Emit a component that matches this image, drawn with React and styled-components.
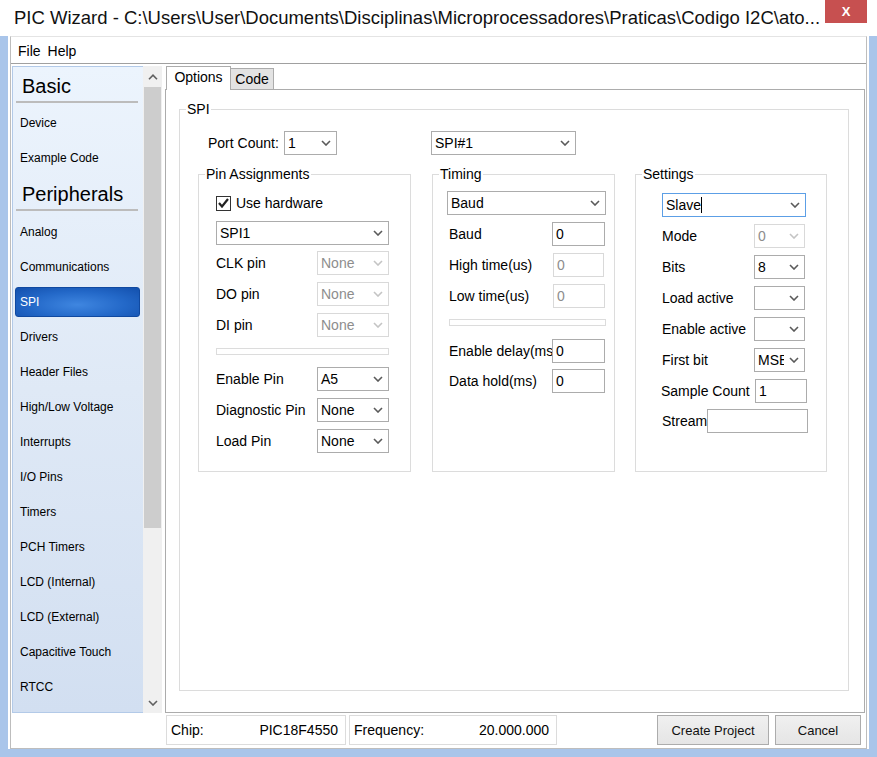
import React from "react";
import styled, { createGlobalStyle } from "styled-components";

const GlobalStyle = createGlobalStyle`
  html, body { margin: 0; padding: 0; background: #fff; }
  body { font-family: "Liberation Sans", Arial, sans-serif; color: #000; }
  *, *::before, *::after { box-sizing: border-box; }
`;

const Window = styled.div`
  width: 877px;
  height: 757px;
  display: flex;
  flex-direction: column;
  background: #fff;
  overflow: hidden;
`;

const TitleBar = styled.div`
  height: 36px;
  flex: none;
  display: flex;
  align-items: center;
  padding-left: 14px;
`;

const Title = styled.div`
  flex: 1;
  min-width: 0;
  font-size: 18.5px;
  white-space: nowrap;
  overflow: hidden;
  color: #111;
`;

const CloseButton = styled.div`
  flex: none;
  align-self: flex-start;
  width: 42px;
  height: 23px;
  margin: 0 10px 0 1px;
  background: #c75050;
  color: #fff;
  font-size: 13px;
  font-weight: bold;
  display: flex;
  align-items: center;
  justify-content: center;
`;

const Frame = styled.div`
  flex: 1;
  min-height: 0;
  display: flex;
  background: #a9c5ea;
  padding: 0 8px 8px;
`;

const Client = styled.div`
  flex: 1;
  display: flex;
  background: #fff;
  padding: 0 2px;
`;

const Inner = styled.div`
  flex: 1;
  display: flex;
  flex-direction: column;
  border: 1px solid #bdbdbd;
  border-top-color: #e4e4e4;
`;

const MenuBar = styled.div`
  height: 27px;
  flex: none;
  display: flex;
  align-items: center;
  gap: 7px;
  padding: 2px 0 0 7px;
  border-bottom: 1px solid #a0a0a0;
  font-size: 14px;
`;

const MainRow = styled.div`
  height: 647px;
  flex: none;
  display: flex;
  margin-top: 2px;
  padding: 0 1px;
`;

const Sidebar = styled.div`
  width: 131px;
  flex: none;
  display: flex;
  flex-direction: column;
  overflow: hidden;
  border: 1px solid #b3cae8;
  border-right: none;
  background: linear-gradient(180deg, #ecf4fd 0%, #dfe9f6 50%, #d2dff1 100%);
`;

const SideHeader = styled.div`
  flex: none;
  height: 36px;
  margin: 0 5px ${(p) => p.$mb}px 3px;
  padding: 5px 0 0 6px;
  line-height: 29px;
  font-size: 20px;
  border-bottom: 2px solid #bcbcbc;
`;

const SideItem = styled.div`
  flex: none;
  height: 35px;
  padding: 3px 3px 2px 2px;
`;

const SideLabel = styled.div`
  height: 30px;
  line-height: 28px;
  padding-left: 4px;
  font-size: 12px;
  border-radius: 3px;
  white-space: nowrap;
  color: ${(p) => (p.$selected ? "#fff" : "#000")};
  background: ${(p) =>
    p.$selected
      ? "radial-gradient(ellipse at 50% 60%, #3f86e0 0%, #2368c8 55%, #1350ad 100%)"
      : "transparent"};
  border: 1px solid ${(p) => (p.$selected ? "#1049a0" : "transparent")};
`;

const ScrollBar = styled.div`
  width: 19px;
  flex: none;
  display: flex;
  flex-direction: column;
  background: #f0f0f0;
`;

const ScrollArrow = styled.div`
  height: 21px;
  flex: none;
  display: flex;
  align-items: center;
  justify-content: center;
`;

const ScrollThumb = styled.div`
  height: 441px;
  margin: 0 1px;
  background: #cdcdcd;
`;

const ScrollSpace = styled.div`
  flex: 1;
`;

const TabArea = styled.div`
  flex: 1;
  min-width: 0;
  margin-left: 3px;
  display: flex;
  flex-direction: column;
`;

const TabStrip = styled.div`
  height: 23px;
  flex: none;
  display: flex;
  align-items: flex-end;
  padding-left: 1px;
  position: relative;
  z-index: 1;
`;

const Tab = styled.div`
  width: ${(p) => p.$w}px;
  height: ${(p) => (p.$active ? 24 : 21)}px;
  margin-bottom: ${(p) => (p.$active ? -1 : 0)}px;
  margin-left: ${(p) => (p.$active ? 0 : -1)}px;
  border: 1px solid #acacac;
  border-bottom: none;
  background: ${(p) => (p.$active ? "#fff" : "#e3e3e3")};
  display: flex;
  justify-content: center;
  padding-top: 2px;
  font-size: 14px;
  line-height: 16px;
`;

const Panel = styled.div`
  flex: 1;
  min-height: 0;
  display: flex;
  flex-direction: column;
  border: 1px solid #acacac;
  background: #fff;
  padding: 11px 15px 21px 13px;
`;

const Group = styled.fieldset`
  margin: 0 0 0 ${(p) => p.$ml || 0}px;
  padding: 0;
  min-width: 0;
  border: 1px solid #dcdcdc;
  ${(p) => (p.$grow ? "flex: 1;" : "")}
  ${(p) => (p.$w ? `width: ${p.$w}px; flex: none;` : "")}
  ${(p) => (p.$h ? `height: ${p.$h}px;` : "")}
`;

const Legend = styled.legend`
  margin-left: 6px;
  padding: 0 1px;
  font-size: 14px;
  line-height: 16px;
`;

const GroupBody = styled.div`
  display: flex;
  flex-direction: column;
  align-items: flex-start;
  padding-left: ${(p) => p.$pl}px;
`;

const PortRow = styled.div`
  display: flex;
  align-items: center;
  height: 24px;
  margin-top: 14px;
  padding-left: 28px;
`;

const GroupsRow = styled.div`
  display: flex;
  align-items: flex-start;
  margin: 11px 0 0 18px;
`;

const Row = styled.div`
  display: flex;
  align-items: center;
  height: 24px;
  margin-top: ${(p) => p.$mt}px;
`;

const Label = styled.div`
  flex: none;
  width: ${(p) => (p.$w ? `${p.$w}px` : "auto")};
  padding-left: ${(p) => p.$pl || 0}px;
  margin-left: ${(p) => p.$ml || 0}px;
  font-size: 14px;
  white-space: nowrap;
  overflow: hidden;
`;

const SelectBox = styled.div`
  flex: none;
  width: ${(p) => p.$w}px;
  height: 24px;
  margin-top: ${(p) => p.$mt || 0}px;
  margin-left: ${(p) => p.$ml || 0}px;
  display: flex;
  align-items: center;
  padding-left: 2px;
  background: #fff;
  font-size: 14px;
  color: ${(p) => (p.$disabled ? "#8d8d8d" : "#000")};
  border: 1px solid
    ${(p) => (p.$focused ? "#5c9fe6" : p.$disabled ? "#d9d9d9" : "#acacac")};
`;

const SelectText = styled.div`
  flex: 1;
  min-width: 0;
  overflow: hidden;
  white-space: nowrap;
  padding-left: 1px;
  display: flex;
  align-items: center;
`;

const SelectArrow = styled.div`
  flex: none;
  width: 20px;
  display: flex;
  align-items: center;
  justify-content: center;
`;

const Caret = styled.span`
  display: inline-block;
  width: 1px;
  height: 16px;
  background: #000;
`;

const InputBox = styled.div`
  flex: none;
  width: ${(p) => p.$w}px;
  height: 24px;
  margin-left: ${(p) => p.$ml || 0}px;
  display: flex;
  align-items: center;
  padding-left: 3px;
  background: #fff;
  font-size: 14px;
  color: ${(p) => (p.$disabled ? "#8d8d8d" : "#000")};
  border: 1px solid ${(p) => (p.$disabled ? "#d9d9d9" : "#acacac")};
`;

const CheckRow = styled.div`
  display: flex;
  align-items: center;
  gap: 5px;
  height: 16px;
  margin-top: 13px;
  font-size: 14px;
`;

const CheckBox = styled.div`
  width: 15px;
  height: 15px;
  border: 1px solid #333;
  background: #fff;
  display: flex;
  align-items: center;
  justify-content: center;
`;

const Separator = styled.div`
  width: ${(p) => p.$w}px;
  height: 7px;
  margin-top: ${(p) => p.$mt}px;
  margin-left: ${(p) => p.$ml || 0}px;
  border: 1px solid #dcdcdc;
  background: #fff;
`;

const StatusBar = styled.div`
  height: 35px;
  flex: none;
  display: flex;
  align-items: flex-start;
  gap: 3px;
  padding: 2px 5px 0 155px;
`;

const StatusField = styled.div`
  width: ${(p) => p.$w}px;
  height: 30px;
  display: flex;
  align-items: center;
  justify-content: space-between;
  padding: 0 7px 0 4px;
  border: 1px solid #dcdcdc;
  font-size: 14px;
`;

const Button = styled.div`
  width: ${(p) => p.$w}px;
  height: 30px;
  margin-left: ${(p) => p.$ml}px;
  display: flex;
  align-items: center;
  justify-content: center;
  border: 1px solid #acacac;
  background: linear-gradient(180deg, #f0f0f0 0%, #e5e5e5 100%);
  font-size: 13px;
  color: #111;
`;

const Chevron = ({ up, color = "#5a5a5a" }) => (
  <svg width="10" height="6" viewBox="0 0 10 6">
    <polyline
      points={up ? "1,5.2 5,1.2 9,5.2" : "1,1 5,5 9,1"}
      fill="none"
      stroke={color}
      strokeWidth="1.6"
    />
  </svg>
);

const Select = ({ w, value, disabled, focused, caret, mt, ml }) => (
  <SelectBox $w={w} $disabled={disabled} $focused={focused} $mt={mt} $ml={ml}>
    <SelectText>
      {value}
      {caret && <Caret />}
    </SelectText>
    <SelectArrow>
      <Chevron color={disabled ? "#c4c4c4" : "#5a5a5a"} />
    </SelectArrow>
  </SelectBox>
);

const sideTop = ["Device", "Example Code"];
const sidePeripherals = [
  "Analog",
  "Communications",
  "SPI",
  "Drivers",
  "Header Files",
  "High/Low Voltage",
  "Interrupts",
  "I/O Pins",
  "Timers",
  "PCH Timers",
  "LCD (Internal)",
  "LCD (External)",
  "Capacitive Touch",
  "RTCC",
  "CCP and PWM",
];

export default function App() {
  return (
    <>
      <GlobalStyle />
      <Window>
        <TitleBar>
          <Title>
            PIC Wizard - C:\Users\User\Documents\Disciplinas\Microprocessadores\Praticas\Codigo I2C\ato...
          </Title>
          <CloseButton>X</CloseButton>
        </TitleBar>
        <Frame>
          <Client>
            <Inner>
              <MenuBar>
                <span>File</span>
                <span>Help</span>
              </MenuBar>
              <MainRow>
                <Sidebar>
                  <SideHeader $mb={2}>Basic</SideHeader>
                  {sideTop.map((t) => (
                    <SideItem key={t}>
                      <SideLabel>{t}</SideLabel>
                    </SideItem>
                  ))}
                  <SideHeader $mb={3}>Peripherals</SideHeader>
                  {sidePeripherals.map((t) => (
                    <SideItem key={t}>
                      <SideLabel $selected={t === "SPI"}>{t}</SideLabel>
                    </SideItem>
                  ))}
                </Sidebar>
                <ScrollBar>
                  <ScrollArrow>
                    <Chevron up color="#606060" />
                  </ScrollArrow>
                  <ScrollThumb />
                  <ScrollSpace />
                  <ScrollArrow>
                    <Chevron color="#606060" />
                  </ScrollArrow>
                </ScrollBar>
                <TabArea>
                  <TabStrip>
                    <Tab $active $w={65}>Options</Tab>
                    <Tab $w={44}>Code</Tab>
                  </TabStrip>
                  <Panel>
                    <Group $grow>
                      <Legend>SPI</Legend>
                      <PortRow>
                        <Label $w={76}>Port Count:</Label>
                        <Select w={53} value="1" />
                        <Select w={145} value="SPI#1" ml={94} />
                      </PortRow>
                      <GroupsRow>
                        <Group $w={213} $h={306}>
                          <Legend>Pin Assignments</Legend>
                          <GroupBody $pl={17}>
                            <CheckRow>
                              <CheckBox>
                                <svg width="11" height="10" viewBox="0 0 11 10">
                                  <polyline
                                    points="1,5 4,8.5 10,1"
                                    fill="none"
                                    stroke="#222"
                                    strokeWidth="2.2"
                                  />
                                </svg>
                              </CheckBox>
                              Use hardware
                            </CheckRow>
                            <Select w={173} value="SPI1" mt={10} />
                            <Row $mt={6}>
                              <Label $w={101}>CLK pin</Label>
                              <Select w={72} value="None" disabled />
                            </Row>
                            <Row $mt={7}>
                              <Label $w={101}>DO pin</Label>
                              <Select w={72} value="None" disabled />
                            </Row>
                            <Row $mt={7}>
                              <Label $w={101}>DI pin</Label>
                              <Select w={72} value="None" disabled />
                            </Row>
                            <Separator $w={173} $mt={11} />
                            <Row $mt={12}>
                              <Label $w={101}>Enable Pin</Label>
                              <Select w={72} value="A5" />
                            </Row>
                            <Row $mt={7}>
                              <Label $w={101}>Diagnostic Pin</Label>
                              <Select w={72} value="None" />
                            </Row>
                            <Row $mt={7}>
                              <Label $w={101}>Load Pin</Label>
                              <Select w={72} value="None" />
                            </Row>
                          </GroupBody>
                        </Group>
                        <Group $w={183} $h={306} $ml={21}>
                          <Legend>Timing</Legend>
                          <GroupBody $pl={14}>
                            <Select w={159} value="Baud" mt={9} />
                            <Row $mt={7}>
                              <Label $w={105} $pl={2}>Baud</Label>
                              <InputBox $w={53}>0</InputBox>
                            </Row>
                            <Row $mt={7}>
                              <Label $w={105} $pl={2}>High time(us)</Label>
                              <InputBox $w={51} $ml={1} $disabled>0</InputBox>
                            </Row>
                            <Row $mt={7}>
                              <Label $w={105} $pl={2}>Low time(us)</Label>
                              <InputBox $w={52} $ml={1} $disabled>0</InputBox>
                            </Row>
                            <Separator $w={157} $mt={11} $ml={2} />
                            <Row $mt={13}>
                              <Label $w={105} $pl={2}>Enable delay(ms)</Label>
                              <InputBox $w={53}>0</InputBox>
                            </Row>
                            <Row $mt={6}>
                              <Label $w={105} $pl={2}>Data hold(ms)</Label>
                              <InputBox $w={53}>0</InputBox>
                            </Row>
                          </GroupBody>
                        </Group>
                        <Group $w={192} $h={306} $ml={20}>
                          <Legend>Settings</Legend>
                          <GroupBody $pl={26}>
                            <Select w={144} value="Slave" focused caret mt={11} />
                            <Row $mt={7}>
                              <Label $w={92}>Mode</Label>
                              <Select w={51} value="0" disabled />
                            </Row>
                            <Row $mt={7}>
                              <Label $w={92}>Bits</Label>
                              <Select w={51} value="8" />
                            </Row>
                            <Row $mt={7}>
                              <Label $w={92}>Load active</Label>
                              <Select w={51} value="" />
                            </Row>
                            <Row $mt={7}>
                              <Label $w={92}>Enable active</Label>
                              <Select w={51} value="" />
                            </Row>
                            <Row $mt={7}>
                              <Label $w={92}>First bit</Label>
                              <Select w={51} value="MSB" />
                            </Row>
                            <Row $mt={7}>
                              <Label $w={94} $ml={-1}>Sample Count</Label>
                              <InputBox $w={52}>1</InputBox>
                            </Row>
                            <Row $mt={6}>
                              <Label>Stream</Label>
                              <InputBox $w={101}></InputBox>
                            </Row>
                          </GroupBody>
                        </Group>
                      </GroupsRow>
                    </Group>
                  </Panel>
                </TabArea>
              </MainRow>
              <StatusBar>
                <StatusField $w={180}>
                  <span>Chip:</span>
                  <span>PIC18F4550</span>
                </StatusField>
                <StatusField $w={208}>
                  <span>Frequency:</span>
                  <span>20.000.000</span>
                </StatusField>
                <Button $w={112} $ml={97}>Create Project</Button>
                <Button $w={86} $ml={3}>Cancel</Button>
              </StatusBar>
            </Inner>
          </Client>
        </Frame>
      </Window>
    </>
  );
}
